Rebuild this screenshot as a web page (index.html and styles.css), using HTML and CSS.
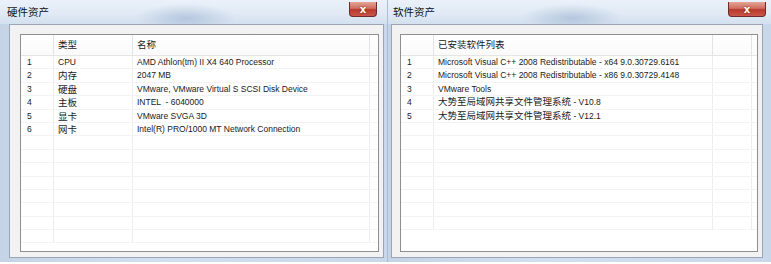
FILE: index.html
```html
<!DOCTYPE html>
<html lang="zh-CN">
<head>
<meta charset="utf-8">
<title>资产</title>
<link rel="stylesheet" href="styles.css">
</head>
<body>
<div class="screen">
  <section class="window win-left">
    <header class="titlebar">
      <span class="title">硬件资产</span>
      <button class="close close-sm" type="button">x</button>
    </header>
    <div class="client">
      <div class="grid hw">
        <div class="row head"><span></span><span>类型</span><span>名称</span><span></span></div>
        <div class="row"><span>1</span><span>CPU</span><span>AMD Athlon(tm) II X4 640 Processor</span><span></span></div>
        <div class="row"><span>2</span><span class="cjk">内存</span><span>2047 MB</span><span></span></div>
        <div class="row"><span>3</span><span class="cjk">硬盘</span><span>VMware, VMware Virtual S SCSI Disk Device</span><span></span></div>
        <div class="row"><span>4</span><span class="cjk">主板</span><span>INTEL &nbsp;- 6040000</span><span></span></div>
        <div class="row"><span>5</span><span class="cjk">显卡</span><span>VMware SVGA 3D</span><span></span></div>
        <div class="row"><span>6</span><span class="cjk">网卡</span><span>Intel(R) PRO/1000 MT Network Connection</span><span></span></div>
        <div class="row"><span></span><span></span><span></span><span></span></div>
        <div class="row"><span></span><span></span><span></span><span></span></div>
        <div class="row"><span></span><span></span><span></span><span></span></div>
        <div class="row"><span></span><span></span><span></span><span></span></div>
        <div class="row"><span></span><span></span><span></span><span></span></div>
        <div class="row"><span></span><span></span><span></span><span></span></div>
        <div class="row"><span></span><span></span><span></span><span></span></div>
        <div class="row"><span></span><span></span><span></span><span></span></div>
      </div>
    </div>
  </section>
  <section class="window win-right">
    <header class="titlebar">
      <span class="title">软件资产</span>
      <button class="close close-lg" type="button">x</button>
    </header>
    <div class="client">
      <div class="grid sw">
        <div class="row head"><span></span><span>已安装软件列表</span><span></span><span></span></div>
        <div class="row"><span>1</span><span>Microsoft Visual C++ 2008 Redistributable - x64 9.0.30729.6161</span><span></span><span></span></div>
        <div class="row"><span>2</span><span>Microsoft Visual C++ 2008 Redistributable - x86 9.0.30729.4148</span><span></span><span></span></div>
        <div class="row"><span>3</span><span>VMware Tools</span><span></span><span></span></div>
        <div class="row"><span>4</span><span><b class="cjk">大势至局域网共享文件管理系统</b> - V10.8</span><span></span><span></span></div>
        <div class="row"><span>5</span><span><b class="cjk">大势至局域网共享文件管理系统</b> - V12.1</span><span></span><span></span></div>
        <div class="row"><span></span><span></span><span></span><span></span></div>
        <div class="row"><span></span><span></span><span></span><span></span></div>
        <div class="row"><span></span><span></span><span></span><span></span></div>
        <div class="row"><span></span><span></span><span></span><span></span></div>
        <div class="row"><span></span><span></span><span></span><span></span></div>
        <div class="row"><span></span><span></span><span></span><span></span></div>
        <div class="row"><span></span><span></span><span></span><span></span></div>
        <div class="row"><span></span><span></span><span></span><span></span></div>
      </div>
    </div>
  </section>
</div>
</body>
</html>
```
FILE: styles.css
```css
* { box-sizing: border-box; }
html, body {
  margin: 0;
  padding: 0;
  background: #ffffff;
}
body {
  width: 771px;
  height: 264px;
  overflow: hidden;
  font-family: "Liberation Sans", Arial, "Noto Sans CJK SC", sans-serif;
  font-size: 8.5px;
  color: #1a1a1a;
}
.screen {
  display: flex;
  height: 262px;
}
.window {
  display: flex;
  flex-direction: column;
  background: linear-gradient(90deg, #c4d4e6 0%, #d2dff0 40%, #c8d8ea 100%);
}
.win-left { width: 387px; padding: 0 3px 4px 9px; }
.win-right { width: 384px; padding: 0 8px 4px 3px; border-left: 1px solid #a9bdd3; }
.titlebar {
  flex: none;
  height: 24px;
  display: flex;
  align-items: flex-start;
  justify-content: space-between;
  margin: 0 -3px 0 -9px;
  padding: 0 0 0 7px;
  background:
    radial-gradient(ellipse 50px 14px at 48% 75%, rgba(150,175,205,0.55), rgba(150,175,205,0) 100%),
    linear-gradient(180deg, #eaf1f9 0%, #e1eaf5 55%, #d3e0ef 100%);
}
.win-right .titlebar { margin: 0 -8px 0 -3px; padding-left: 5px; }
.title {
  font-family: "Noto Sans CJK SC", sans-serif;
  font-size: 10.5px;
  line-height: 12px;
  margin-top: 6px;
  color: #111;
}
.close {
  margin-top: 2px;
  height: 15px;
  border: 1px solid #6d2b2b;
  border-top: none;
  border-radius: 0 0 4px 4px;
  background: linear-gradient(180deg, #e4a596 0%, #cf6d5f 45%, #b9392c 55%, #c9574a 100%);
  color: #ffffff;
  font-family: "DejaVu Sans", sans-serif;
  font-weight: bold;
  font-size: 10px;
  line-height: 11px;
  padding: 0;
  text-shadow: 0 0 2px #6a1d15;
}
.close-sm { width: 28px; margin-right: 10px; }
.close-lg { width: 38px; margin-right: 5px; }
.client {
  flex: 1;
  min-height: 0;
  background: #f2f2f2;
  border: 1px solid #9aa6b4;
  padding: 9px 4px 5px 10px;
  display: flex;
}
.win-right .client { padding: 9px 4px 5px 8px; }
.grid {
  flex: 1;
  min-height: 0;
  background: #fff;
  border: 1px solid #8f8f8f;
  overflow: hidden;
  display: flex;
  flex-direction: column;
}
.row {
  display: grid;
  height: 13.4px;
  flex: none;
  border-bottom: 1px solid #f3f3f3;
  align-items: stretch;
}
.hw .row { grid-template-columns: 33px 79px 1fr 8px; }
.sw .row { grid-template-columns: 33px 279px 1fr 5px; }
.row span {
  border-right: 1px solid #ededed;
  padding-left: 6px;
  white-space: nowrap;
  line-height: 12.4px;
}
.hw .row span:nth-child(2) { padding-left: 4px; }
.hw .row span:nth-child(3) { padding-left: 4px; }
.sw .row span:nth-child(2) { padding-left: 4px; }
.row span:last-child { border-right: none; }
.row.head {
  height: 21px;
  background: linear-gradient(180deg, #ffffff 0%, #fafafa 100%);
  border-bottom: 1px solid #e5e5e5;
}
.row.head span {
  font-family: "Noto Sans CJK SC", sans-serif;
  font-size: 9.5px;
  line-height: 19px;
  border-right-color: #e3e3e3;
}
.cjk {
  font-family: "Noto Sans CJK SC", sans-serif;
  font-size: 9.5px;
  font-weight: normal;
  line-height: 11px;
}
```
